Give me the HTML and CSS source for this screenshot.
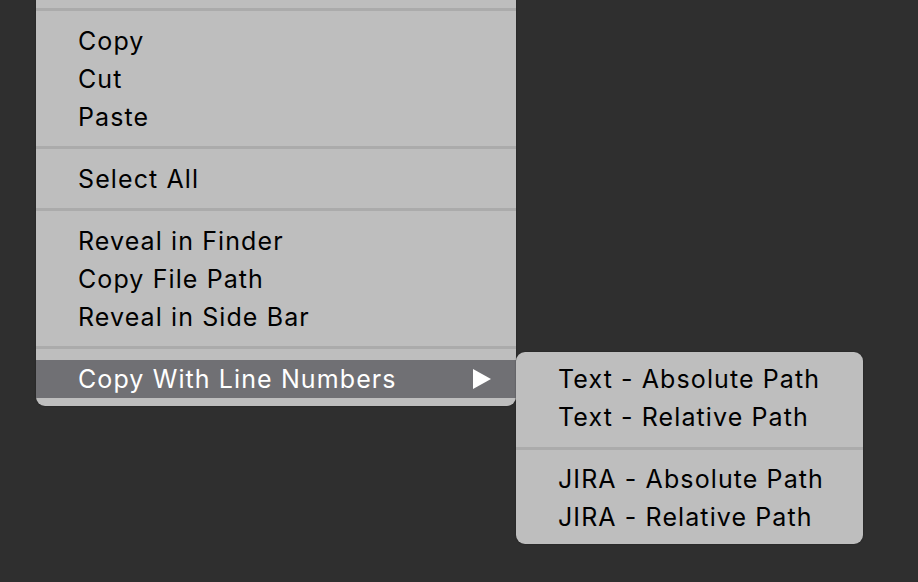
FILE: index.html
```html
<!DOCTYPE html>
<html>
<head>
<meta charset="utf-8">
<link rel="stylesheet" href="styles.css">
</head>
<body>
<div class="stage">
  <div class="menu main">
    <div class="sep first"></div>
    <div class="item">Copy</div>
    <div class="item">Cut</div>
    <div class="item">Paste</div>
    <div class="sep"></div>
    <div class="item">Select All</div>
    <div class="sep"></div>
    <div class="item">Reveal in Finder</div>
    <div class="item">Copy File Path</div>
    <div class="item">Reveal in Side Bar</div>
    <div class="sep"></div>
    <div class="item active">
      <span>Copy With Line Numbers</span>
      <svg class="arrow" width="18" height="20" viewBox="0 0 18 20"><polygon points="0,0 18,10 0,20" fill="#ffffff"/></svg>
    </div>
  </div>
  <div class="menu sub">
    <div class="item">Text - Absolute Path</div>
    <div class="item">Text - Relative Path</div>
    <div class="sep"></div>
    <div class="item">JIRA - Absolute Path</div>
    <div class="item">JIRA - Relative Path</div>
  </div>
</div>
</body>
</html>
```
FILE: styles.css
```css
html, body {
  margin: 0;
  padding: 0;
  background: #2f2f2f;
  width: 918px;
  height: 582px;
  overflow: hidden;
}
.stage {
  display: flex;
  align-items: flex-start;
  padding-left: 36px;
  font-family: Inter, "Liberation Sans", sans-serif;
  font-size: 25px;
  letter-spacing: 1.1px;
  color: #000000;
}
.menu {
  background: #bebebe;
  box-shadow: 0 0 2px rgba(0,0,0,0.35);
}
.main {
  width: 480px;
  padding-bottom: 8px;
  border-radius: 0 0 9px 9px;
}
.sub {
  width: 347px;
  margin-top: 352px;
  padding: 8px 0;
  border-radius: 9px;
}
.item {
  height: 38px;
  line-height: 38px;
  padding-left: 42px;
  display: flex;
  align-items: center;
  white-space: nowrap;
}
.active {
  background: #707074;
  color: #ffffff;
  justify-content: space-between;
  padding-right: 25px;
}
.sep {
  height: 3px;
  background: #ababab;
  margin: 10.5px 0;
}
.sep.first {
  margin-top: 8px;
}
.arrow {
  display: block;
}
```
